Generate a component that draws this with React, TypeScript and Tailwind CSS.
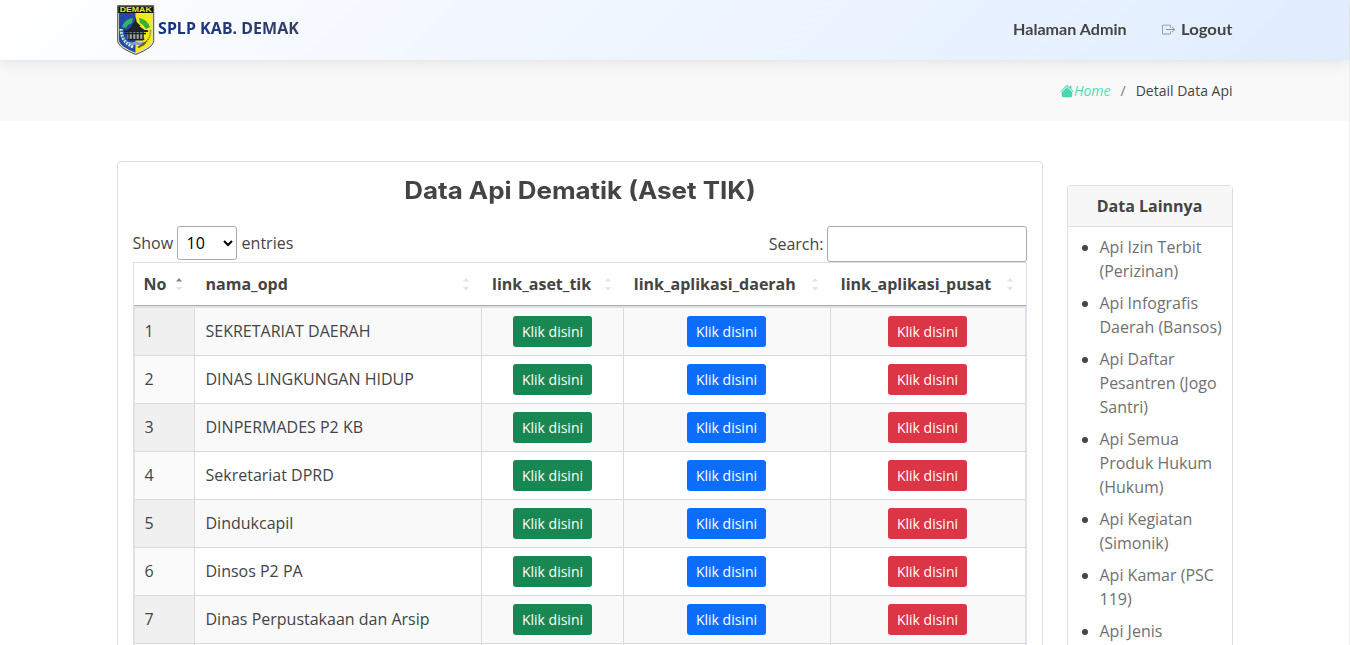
import React from "react";
import { BsHouseFill, BsBoxArrowRight } from "react-icons/bs";

const opd = [
  "SEKRETARIAT DAERAH",
  "DINAS LINGKUNGAN HIDUP",
  "DINPERMADES P2 KB",
  "Sekretariat DPRD",
  "Dindukcapil",
  "Dinsos P2 PA",
  "Dinas Perpustakaan dan Arsip",
];

const others = [
  "Api Izin Terbit (Perizinan)",
  "Api Infografis Daerah (Bansos)",
  "Api Daftar Pesantren (Jogo Santri)",
  "Api Semua Produk Hukum (Hukum)",
  "Api Kegiatan (Simonik)",
  "Api Kamar (PSC 119)",
  "Api Jenis",
];

const columns = [
  { name: "No", width: "w-[61px]", pad: "pl-[9.500px]" },
  { name: "nama_opd", width: "w-[287px]", pad: "pl-[10.500px]" },
  { name: "link_aset_tik", width: "w-[142px]", pad: "pl-[10px]" },
  { name: "link_aplikasi_daerah", width: "w-[207px]", pad: "pl-[9.750px]" },
  { name: "link_aplikasi_pusat", width: "w-[195px]", pad: "pl-[9.750px]" },
];

function Crest() {
  return (
    <svg width="38" height="50" viewBox="0 0 38 50" className="-mt-px block shrink-0">
      <path d="M.7.7h36v34.800c0 5-6.500 9.300-18 14C7.200 44.800.7 40.500.7 35.500z" fill="#deded2" stroke="#4c4e48" strokeWidth="1" />
      <path d="M2 7.500h16.700v40.300C8.500 43.500 2 39.600 2 35z" fill="#2746a8" />
      <path d="M18.700 7.500h16.700V35c0 4.600-6.500 8.500-16.700 12.800z" fill="#f4ea1f" />
      <path d="M1.200 1.200h35v6.800h-35z" fill="#14140c" />
      <text x="18.700" y="7.100" textAnchor="middle" textLength="32" lengthAdjust="spacingAndGlyphs" fontSize="7" className="font-['Liberation_Sans'] font-bold" fill="#f5e81f">DEMAK</text>
      <path d="M5 22c1.500-5 6-8.500 11-9l-1 5-4 2-2 3z" fill="#31b567" />
      <path d="M22 13c5 .5 9 4 11 9l-4 2-3-4-3-2z" fill="#31b03a" />
      <path d="M18.700 11.500l1 5.500 4 4h-1.500l5.300 4h3l.7 2H6.700l.7-2h3l5-4H14l3.700-4z" fill="#1d2328" />
      <path d="M10.500 27h16.500v7H10.500z" fill="#a3aaa8" />
      <path d="M8 28.500h21M12 27v8M15.500 27v8M19 27v8M22.500 27v8M26 27v8" stroke="#1d252b" strokeWidth="1.400" />
      <path d="M10 33.800h18l-2 1.700H12z" fill="#1d252b" />
      <path d="M11 36.500l4 1 4-1 4 1 4-1v2.500l-4 1.500-4-1-4 1-3-1z" fill="#7f9be0" />
      <path d="M4 24c.5 9 4 14.500 12 18" fill="none" stroke="#d9efe2" strokeWidth="3" strokeDasharray="2 1" />
      <path d="M4.300 25c.8 8 4 13 11 16.300" fill="none" stroke="#35ad80" strokeWidth="1.300" strokeDasharray="1.500 1.500" />
      <path d="M33.500 25c0 9-4 13-12.500 17.500" fill="none" stroke="#88832d" strokeWidth="1.500" strokeDasharray="1.500 .8" />
      <path d="M20.500 42l10-7-3 5-6 3z" fill="#625f22" />
    </svg>
  );
}

function SortMark({ active = false }: { active?: boolean }) {
  return (
    <svg width="6" height="13" viewBox="0 0 6 13" className="mr-[13px] shrink-0">
      <path d="M0 3.500 3 0l3 3.500z" fill={active ? "#808080" : "#e3e3e3"} />
      <path d="M0 9h6l-3 3.500z" fill="#e3e3e3" />
    </svg>
  );
}

function LinkButton({ color }: { color: string }) {
  return (
    <button className={`${color} h-[31px] w-[79px] rounded-[3px] text-[14px] leading-[21px] text-white`}>Klik disini</button>
  );
}

export default function App() {
  return (
    <div className="h-[645px] w-[1350px] overflow-hidden bg-white font-['Open_Sans',sans-serif] text-[16px] leading-6 text-[#444444]">
      <div className="h-full w-full border-r border-[#eeeeee]">
        <header className="relative flex h-[60px] items-center justify-between bg-[linear-gradient(135deg,#ffffff_0%,#f7faff_20%,#e7f1ff_75%,#e0edff_100%)] pr-[117px] pl-[116.500px] shadow-[0_2px_15px_rgba(0,0,0,0.1)]">
          <div className="flex items-center">
            <Crest />
            <span className="mb-[5px] ml-[3.500px] h-6 w-[142px] bg-linear-to-r from-[#11308c] to-[#353f63] bg-clip-text font-['Noto_Sans',sans-serif] text-[16px] leading-6 font-bold tracking-[0.06px] whitespace-nowrap text-transparent">
              SPLP KAB. DEMAK
            </span>
          </div>
          <nav className="flex items-center pb-[2px] font-['Lato',sans-serif] text-[15px] leading-5 font-bold">
            <a className="w-[114px] origin-left scale-x-[1.075] whitespace-nowrap">Halaman Admin</a>
            <BsBoxArrowRight className="mt-px ml-[35px] h-[13px] w-[13px] text-[#89919c]" />
            <a className="ml-[6px] w-[51px] origin-left scale-x-[1.11]">Logout</a>
          </nav>
        </header>

        <section className="flex h-[61px] items-center justify-end bg-[#f9f9f9] pr-[116.500px] text-[14px] leading-[21px]">
          <BsHouseFill className="h-[14px] w-[14px] text-[#47d8ae]" />
          <a className="text-[#56dbb5] italic">Home</a>
          <span className="px-[10px] text-[#6c757d]">/</span>
          <span>Detail Data Api</span>
        </section>

        <main className="flex items-start pt-10 pl-[117px]">
          <section className="h-[600px] w-[926px] rounded-[4px] border border-[#dfdfdf] px-[15px] pt-[14px]">
            <h1 className="scale-x-[1.08] text-center font-['Inter',sans-serif] text-[24px] leading-[30px] font-bold">Data Api Dematik (Aset TIK)</h1>
            <div className="mt-[20px] flex h-[36px] items-start justify-between">
              <label className="-ml-[0.500px] flex items-center">
                Show
                <select className="mr-[5px] ml-[3.500px] h-[34px] w-[60px] rounded-[3px] border border-[#aaaaaa] bg-white p-[4px] pl-[5px] text-black" defaultValue="10">
                  <option>10</option>
                  <option>25</option>
                </select>
                entries
              </label>
              <label className="flex items-center">
                Search:
                <input className="ml-[3.500px] h-[36px] w-[200px] rounded-[3px] border border-[#aaaaaa] bg-white p-[5px]" />
              </label>
            </div>

            <div className="w-[894px] border border-[#dee2e6]">
              <div className="flex h-[43px] border-b border-[#aaaeb1] font-bold">
                {columns.map((c, i) => (
                  <div key={c.name} className={`${c.width} ${c.pad} flex shrink-0 items-center justify-between`}>
                    {c.name}
                    <SortMark active={i === 0} />
                  </div>
                ))}
              </div>
              <div className="border-x border-t-2 border-[#dee2e6]">
                {opd.map((name, i) => (
                  <div key={name} className={`flex h-12 border-b border-[#dadada] ${i % 2 === 0 ? "bg-[#f9f9f9]" : "bg-white"}`}>
                    <div className={`flex w-[60px] shrink-0 items-center border-r border-[#dadada] pb-px pl-[9.500px] ${i % 2 === 0 ? "bg-[#f0f0f0]" : "bg-[#fafafa]"}`}>{i + 1}</div>
                    <div className="flex w-[287px] shrink-0 items-center border-r border-[#dadada] pb-px pl-[10.500px]">{name}</div>
                    <div className="flex w-[142px] shrink-0 items-center justify-center border-r border-[#dadada]"><LinkButton color="bg-[#198754]" /></div>
                    <div className="flex w-[207px] shrink-0 items-center justify-center border-r border-[#dadada] pr-px"><LinkButton color="bg-[#0d6efd]" /></div>
                    <div className="flex grow items-center justify-center pr-px"><LinkButton color="bg-[#dc3545]" /></div>
                  </div>
                ))}
                <div className="flex h-12 bg-white">
                  <div className="w-[60px] shrink-0 border-r border-[#dadada] bg-[#fafafa]" />
                  <div className="w-[287px] shrink-0 border-r border-[#dadada]" />
                  <div className="w-[142px] shrink-0 border-r border-[#dadada]" />
                  <div className="w-[207px] shrink-0 border-r border-[#dadada]" />
                </div>
              </div>
            </div>
          </section>

          <aside className="mt-6 ml-6 h-[600px] w-[166px] rounded-[4px] border border-[#dfdfdf]">
            <h2 className="h-[41px] border-b border-[#dfdfdf] bg-[#f7f7f7] pt-[8px] pr-px text-center font-bold">Data Lainnya</h2>
            <ul className="list-disc pt-2 pr-2 pl-[31.500px]">
              {others.map((item) => (
                <li key={item} className="mb-2"><a className="text-[#707070]">{item}</a></li>
              ))}
            </ul>
          </aside>
        </main>
      </div>
    </div>
  );
}
